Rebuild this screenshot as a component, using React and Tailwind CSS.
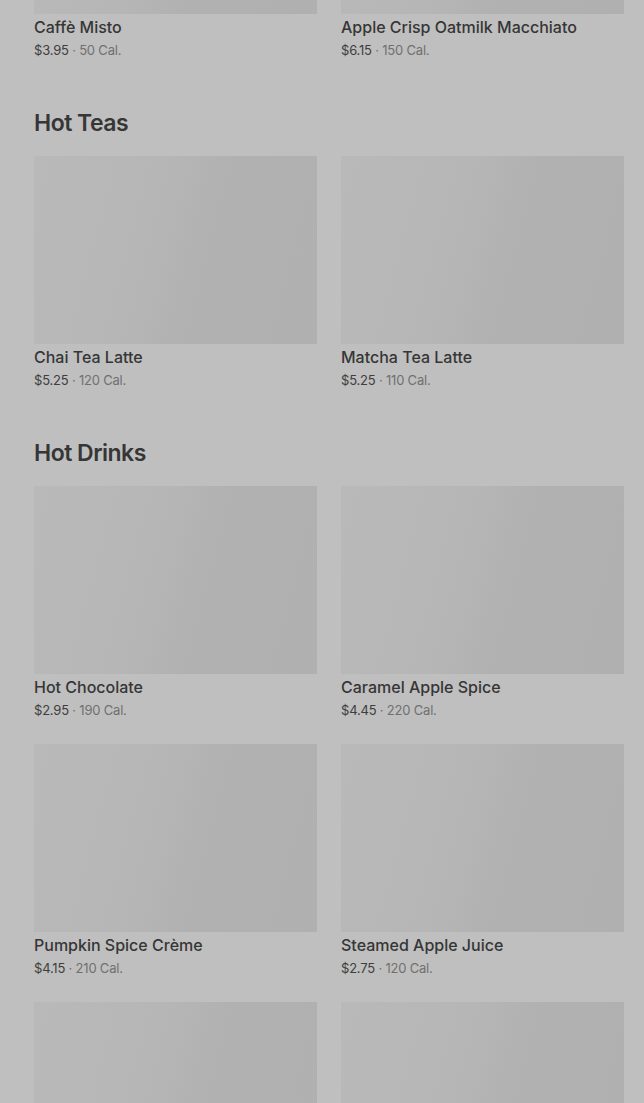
const sections = [
  {
    title: null,
    items: [
      { name: "Caffè Misto", price: "$3.95", cal: "50 Cal." },
      { name: "Apple Crisp Oatmilk Macchiato", price: "$6.15", cal: "150 Cal." },
    ],
  },
  {
    title: "Hot Teas",
    items: [
      { name: "Chai Tea Latte", price: "$5.25", cal: "120 Cal." },
      { name: "Matcha Tea Latte", price: "$5.25", cal: "110 Cal." },
    ],
  },
  {
    title: "Hot Drinks",
    items: [
      { name: "Hot Chocolate", price: "$2.95", cal: "190 Cal." },
      { name: "Caramel Apple Spice", price: "$4.45", cal: "220 Cal." },
      { name: "Pumpkin Spice Crème", price: "$4.15", cal: "210 Cal." },
      { name: "Steamed Apple Juice", price: "$2.75", cal: "120 Cal." },
      { name: "", price: "", cal: "" },
      { name: "", price: "", cal: "" },
    ],
  },
];

function Card({ item }) {
  return (
    <div className="flex flex-col">
      <div className="h-[188px] w-full bg-[linear-gradient(105deg,#b9b9b9_0%,#b6b6b6_40%,#b1b1b1_60%,#b0b0b0_100%)]" />
      {item.name && (
        <>
          <div className="mt-[3px] text-[16px] leading-[20px] font-medium text-[#363636] whitespace-nowrap">
            {item.name}
          </div>
          <div className="mt-[4px] text-[13px] leading-[19px] tracking-[-0.2px] text-[#3e3e3e] whitespace-nowrap">
            {item.price}
            <span className="text-[#707070]"> · {item.cal}</span>
          </div>
        </>
      )}
    </div>
  );
}

export default function App() {
  return (
    <div
      className="min-h-[1103px] w-[644px] overflow-hidden bg-[#bfbfbf]"
      style={{ fontFamily: "Inter, 'Noto Sans', sans-serif" }}
    >
      <div className="-mt-[174px] pl-[34px] pr-[20px] flex flex-col">
        {sections.map((s, i) => (
          <div key={i} className={i === 0 ? "" : "mt-[47px]"}>
            {s.title && (
              <h2 className="mb-[17px] text-[23px] leading-[32px] font-semibold tracking-[-0.5px] text-[#363636]">
                {s.title}
              </h2>
            )}
            <div className="grid grid-cols-2 gap-x-6 gap-y-6">
              {s.items.map((it, j) => (
                <Card key={j} item={it} />
              ))}
            </div>
          </div>
        ))}
      </div>
    </div>
  );
}
